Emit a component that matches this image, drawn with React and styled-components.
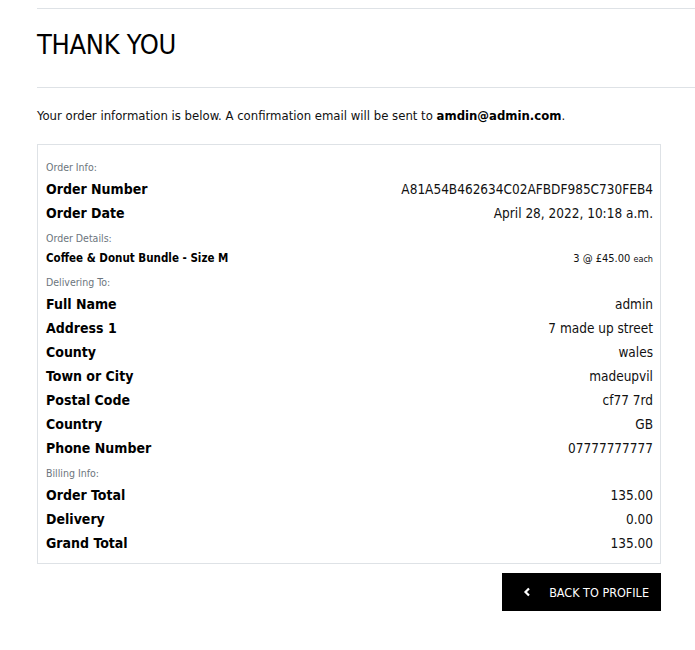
import React from "react";
import styled, { createGlobalStyle } from "styled-components";

const GlobalStyle = createGlobalStyle`
  html, body {
    margin: 0;
    padding: 0;
    background: #ffffff;
  }
  body {
    font-family: "DejaVu Sans Condensed", "Liberation Sans", sans-serif;
    color: #000000;
    overflow-x: hidden;
  }
`;

const Page = styled.div`
  padding: 8px 0 40px 37px;
`;

const Rule = styled.hr`
  margin: 0;
  border: 0;
  border-top: 1px solid #dee2e6;
`;

const Title = styled.h1`
  margin: 18px 0 24px;
  font-size: 27px;
  line-height: 36px;
  font-weight: 400;
  letter-spacing: -0.3px;
`;

const Intro = styled.p`
  margin: 17px 0 18px;
  font-size: 13px;
  line-height: 21px;
  color: #111;

  strong {
    font-weight: 700;
    color: #000;
  }
`;

const Column = styled.div`
  width: 624px;
  display: flex;
  flex-direction: column;
`;

const Card = styled.div`
  box-sizing: border-box;
  width: 100%;
  border: 1px solid #dee2e6;
  padding: 9px 7px 8px 8px;
`;

const SectionLabel = styled.div`
  margin-top: 3px;
  height: 20px;
  line-height: 20px;
  font-size: 10.5px;
  color: #6c757d;
`;

const Row = styled.div`
  display: flex;
  justify-content: space-between;
  align-items: center;
  height: ${(p) => (p.$compact ? "21px" : "24px")};
  line-height: ${(p) => (p.$compact ? "21px" : "24px")};
`;

const Key = styled.span`
  font-weight: 700;
  font-size: ${(p) => (p.$compact ? "11.5px" : "14px")};
`;

const Value = styled.span`
  font-size: ${(p) => (p.$compact ? "11px" : "13.5px")};
  color: #111;
`;

const Small = styled.span`
  font-size: 9px;
`;

const BackButton = styled.a`
  align-self: flex-end;
  margin-top: 9px;
  height: 38px;
  box-sizing: border-box;
  display: flex;
  align-items: center;
  gap: 18px;
  padding: 0 12px 0 21px;
  background: #000;
  color: #fff;
  text-decoration: none;
  font-size: 12.5px;
  text-transform: uppercase;
  cursor: pointer;
`;

const Chevron = () => (
  <svg width="8" height="10" viewBox="0 0 8 10" aria-hidden="true">
    <path d="M6 1.5 L2.5 5 L6 8.5" fill="none" stroke="#fff" strokeWidth="2.2" />
  </svg>
);

const sections = [
  {
    label: "Order Info:",
    rows: [
      ["Order Number", "A81A54B462634C02AFBDF985C730FEB4"],
      ["Order Date", "April 28, 2022, 10:18 a.m."],
    ],
  },
  { label: "Order Details:", item: true },
  {
    label: "Delivering To:",
    rows: [
      ["Full Name", "admin"],
      ["Address 1", "7 made up street"],
      ["County", "wales"],
      ["Town or City", "madeupvil"],
      ["Postal Code", "cf77 7rd"],
      ["Country", "GB"],
      ["Phone Number", "07777777777"],
    ],
  },
  {
    label: "Billing Info:",
    rows: [
      ["Order Total", "135.00"],
      ["Delivery", "0.00"],
      ["Grand Total", "135.00"],
    ],
  },
];

export default function App() {
  return (
    <>
      <GlobalStyle />
      <Page>
        <Rule />
        <Title>THANK YOU</Title>
        <Rule />
        <Intro>
          Your order information is below. A confirmation email will be sent to{" "}
          <strong>amdin@admin.com</strong>.
        </Intro>
        <Column>
          <Card>
            {sections.map((s) => (
              <React.Fragment key={s.label}>
                <SectionLabel>{s.label}</SectionLabel>
                {s.item ? (
                  <Row $compact>
                    <Key $compact>Coffee &amp; Donut Bundle - Size M</Key>
                    <Value $compact>
                      3 @ £45.00 <Small>each</Small>
                    </Value>
                  </Row>
                ) : (
                  s.rows.map(([k, v]) => (
                    <Row key={k}>
                      <Key>{k}</Key>
                      <Value>{v}</Value>
                    </Row>
                  ))
                )}
              </React.Fragment>
            ))}
          </Card>
          <BackButton>
            <Chevron />
            Back to Profile
          </BackButton>
        </Column>
      </Page>
    </>
  );
}
